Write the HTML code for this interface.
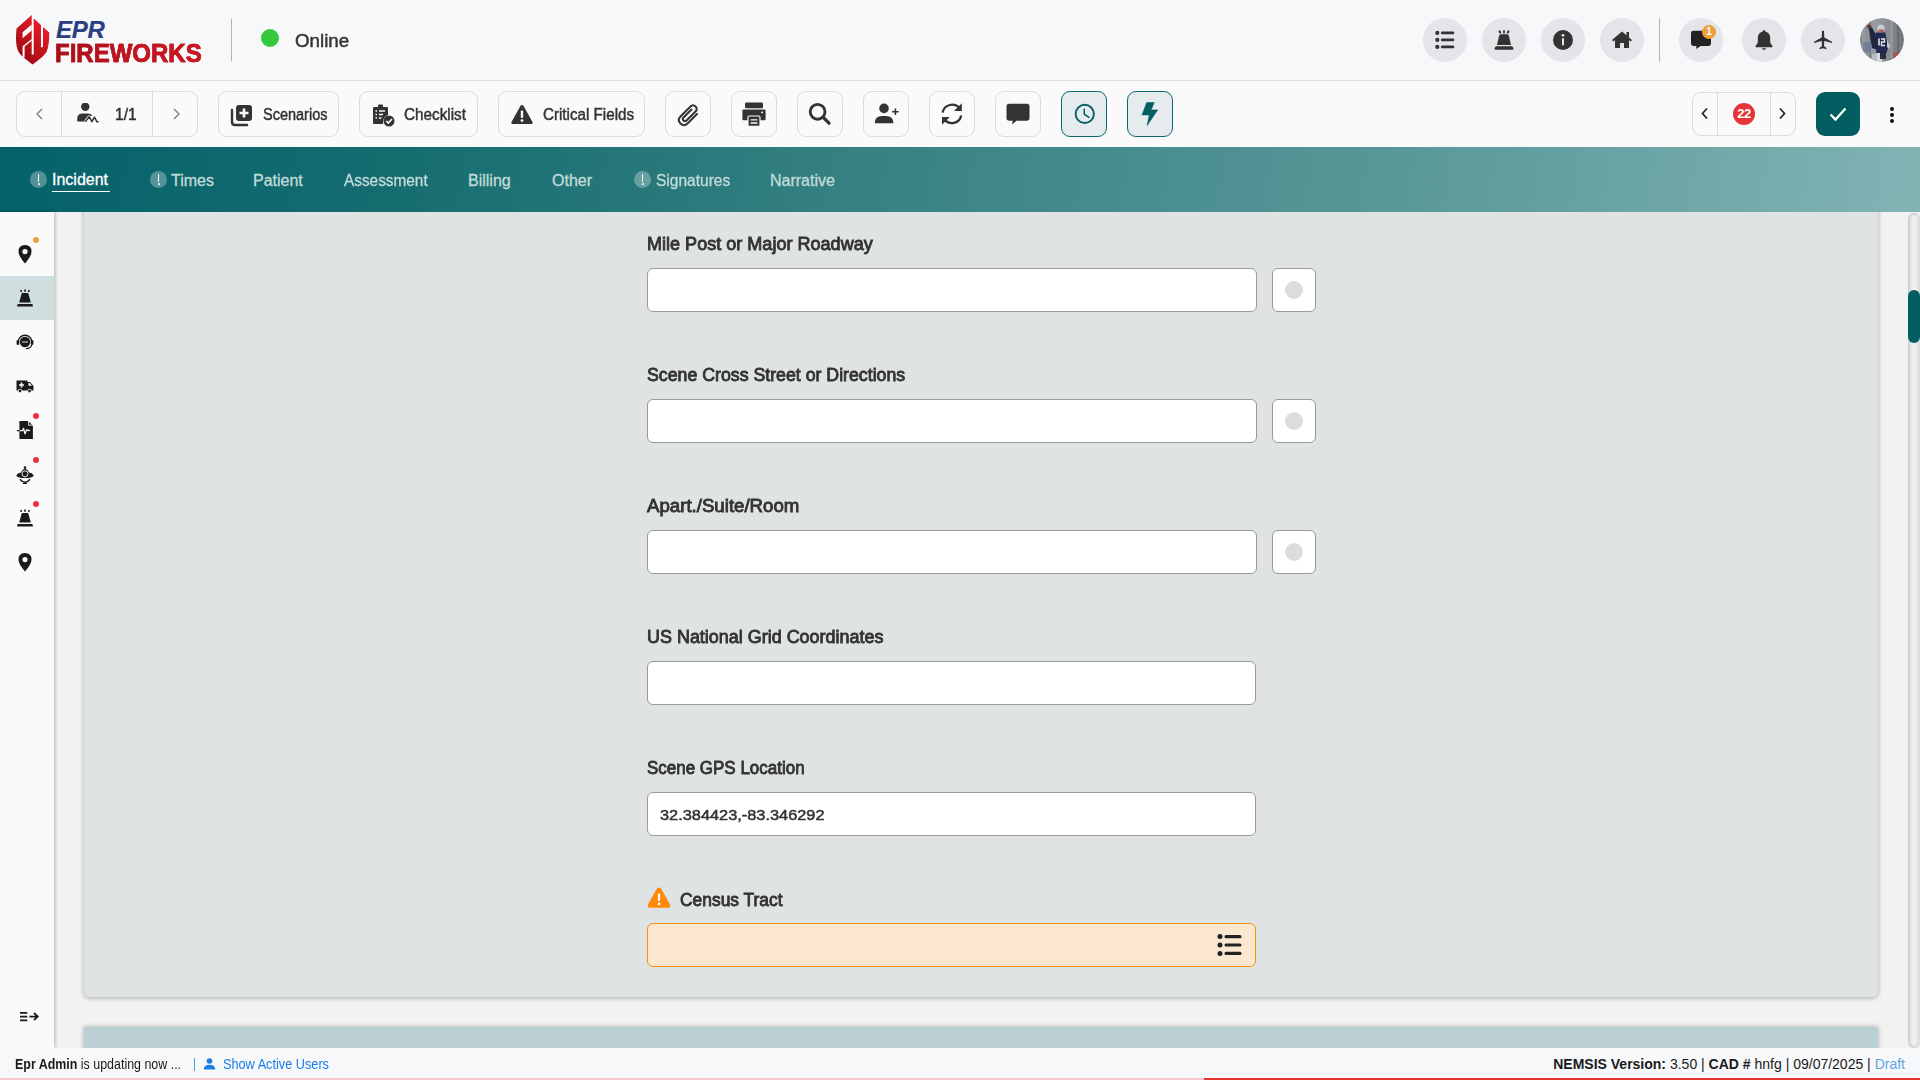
<!DOCTYPE html>
<html><head><meta charset="utf-8">
<style>
*{box-sizing:border-box;margin:0;padding:0}
html,body{width:1920px;height:1080px;overflow:hidden;font-family:"Liberation Sans",sans-serif;background:#f2f2f2;color:#333}
.abs{position:absolute}
#hdr{position:absolute;left:0;top:0;width:1920px;height:81px;background:#f7f8fa;border-bottom:1px solid #dedede}
#tb{position:absolute;left:0;top:81px;width:1920px;height:66px;background:#fafafa}
#tabs{position:absolute;left:0;top:147px;width:1920px;height:65px;background:linear-gradient(100deg,#05616a 0%,#146c6f 20%,#378182 45%,#5c9a9b 75%,#82b4b4 100%)}
#side{position:absolute;left:0;top:212px;width:54px;height:836px;background:#fafafa;box-shadow:1px 0 4px rgba(0,0,0,.26)}
#main{position:absolute;left:54px;top:212px;width:1866px;height:836px;overflow:hidden;background:#f2f2f2}
#card{position:absolute;left:30px;top:-60px;width:1794px;height:845px;background:#dfe3e4;border-radius:6px;box-shadow:0 1px 5px rgba(0,0,0,.3)}
#card2{position:absolute;left:30px;top:815px;width:1794px;height:60px;background:#bad0d3;border-radius:0;box-shadow:0 0 5px rgba(0,0,0,.3)}
#strack{position:absolute;left:1854px;top:1px;width:12px;height:835px;border-radius:6px;background:#efefef;box-shadow:inset 2px 0 3px rgba(0,0,0,.16),inset -2px 0 3px rgba(0,0,0,.1)}
#sthumb{position:absolute;left:1854px;top:78px;width:12px;height:53px;border-radius:6px;background:#035d61}
#foot{position:absolute;left:0;top:1048px;width:1920px;height:32px;background:#f7f8fa}
.btn{position:absolute;top:10px;height:46px;border:1px solid #dcdcdc;border-radius:9px;background:#fafafa}
.ib{width:46px}
.btxt{position:absolute;top:14px;font-size:16px;color:#333;white-space:nowrap;-webkit-text-stroke:0.45px #333;transform-origin:0 0}
.circ{position:absolute;top:18px;width:44px;height:44px;border-radius:50%;background:#e3e5e8}
.circ svg{position:absolute;left:11px;top:11px}
.tab{position:absolute;top:171px;font-size:16px;color:#c2dcdb;white-space:nowrap;-webkit-text-stroke:0.3px currentColor}
.ex{position:absolute;top:171px;width:17px;height:17px;border-radius:50%;background:rgba(255,255,255,.3)}
.ex:after{content:"";position:absolute;left:7.7px;top:3px;width:1.6px;height:7.5px;background:#fff;border-radius:1px}
.ex:before{content:"";position:absolute;left:7.5px;top:11.8px;width:2px;height:2px;background:#fff;border-radius:1px;transform:rotate(45deg)}
.lbl{position:absolute;font-size:18px;font-weight:400;color:#333;white-space:nowrap;transform-origin:0 0;-webkit-text-stroke:0.85px #333}
.inp{position:absolute;width:610px;height:44px;background:#fff;border:1px solid #9a9a9a;border-radius:6px}
.rad{position:absolute;width:44px;height:44px;background:#fff;border:1px solid #9a9a9a;border-radius:6px}
.rad:after{content:"";position:absolute;left:12px;top:12px;width:18px;height:18px;border-radius:50%;background:#dcdcdc}
.sico{position:absolute;left:15px;width:20px;height:20px}
.sdot{position:absolute;left:33px;width:6px;height:6px;border-radius:50%;background:#e8343a}
</style></head><body>
<div id="hdr">
<svg class="abs" style="left:10px;top:10px" width="50" height="60" viewBox="0 0 50 60">
<defs><linearGradient id="lg" x1="0.8" y1="0.1" x2="0.2" y2="0.9"><stop offset="0" stop-color="#ee1c2a"/><stop offset="1" stop-color="#9c0b12"/></linearGradient></defs>
<path d="M21.7,5 L6.6,18.6 C5.8,25 5.8,31 6.6,36 C7.6,41 9.8,44.5 12.8,46.8 L14.8,48.5 L22.5,54.4 C28,50.5 34,46 36.5,42 C38.8,37.5 39.2,30 39.2,22.6 L23.7,8.4 Z" fill="url(#lg)"/>
<path d="M21.7,4.5 L23.7,4.5 L23.7,44.5 L21.7,44.5 Z" fill="#fff"/>
<path d="M12.6,22.3 L21.7,14.6 L21.7,20.6 L12.6,28.2 Z" fill="#fff"/>
<path d="M12.6,36.2 L21.7,29 L21.7,30.8 L14.6,36.6 L14.6,47.5 L12.6,47.5 Z" fill="#fff"/>
<path d="M31,14 L33,15.8 L33,36.8 L31,37.5 Z" fill="#fff"/>
</svg>
<div class="abs" style="left:56px;top:16px;font-size:24px;font-weight:700;font-style:italic;color:#2b3e84;letter-spacing:-0.3px;-webkit-text-stroke:0.2px #2b3e84">EPR</div>
<div class="abs" style="left:55px;top:39px;font-size:25px;font-weight:700;color:#b8121c;transform:scaleX(0.96);transform-origin:0 0;letter-spacing:0px;-webkit-text-stroke:0.6px #b5131c;background:linear-gradient(90deg,#a50e17,#c8141f 60%,#d0161f);-webkit-background-clip:text;background-clip:text;-webkit-text-fill-color:transparent">FIREWORKS</div>
<div class="abs" style="left:231px;top:19px;width:1px;height:42px;background:#b4b4b4"></div>
<div class="abs" style="left:261px;top:29px;width:18px;height:18px;border-radius:50%;background:#33c93b"></div>
<div class="abs" style="left:295px;top:31px;font-size:18px;color:#333;-webkit-text-stroke:0.45px #333;transform:scaleX(1.04);transform-origin:0 0">Online</div>
<div class="circ" style="left:1423px"><svg width="22" height="22" viewBox="0 0 22 22" style="left:11px;top:11px"><circle cx="3.3" cy="3.9" r="2.1" fill="#333"/><circle cx="3.3" cy="10.9" r="2.1" fill="#333"/><circle cx="3.3" cy="17.9" r="2.1" fill="#333"/><rect x="6.9" y="2.6" width="13.4" height="2.7" rx="1.3" fill="#333"/><rect x="6.9" y="9.6" width="13.4" height="2.7" rx="1.3" fill="#333"/><rect x="6.9" y="16.6" width="13.4" height="2.7" rx="1.3" fill="#333"/></svg></div>
<div class="circ" style="left:1482px"><svg width="22" height="22" viewBox="0 0 22 22" style="left:11px;top:10px"><path d="M8,6.3 L14,6.3 Q15.6,6.3 15.9,7.8 L18,16.9 L4,16.9 L6.1,7.8 Q6.4,6.3 8,6.3 Z" fill="#333"/><path d="M3.2,18.2 L18.8,18.2 Q20.4,18.6 20.4,20.2 L20.4,21 Q20.4,21.8 19.6,21.8 L2.4,21.8 Q1.6,21.8 1.6,21 L1.6,20.2 Q1.6,18.6 3.2,18.2 Z" fill="#333"/><ellipse cx="6.9" cy="4" rx="1.1" ry="1.8" transform="rotate(-30 6.9 4)" fill="#333"/><ellipse cx="11" cy="3.9" rx="1" ry="1.8" fill="#333"/><ellipse cx="15.1" cy="4" rx="1.1" ry="1.8" transform="rotate(30 15.1 4)" fill="#333"/></svg></div>
<div class="circ" style="left:1541px"><svg width="22" height="22" viewBox="0 0 22 22"><circle cx="11" cy="11" r="10" fill="#333"/><circle cx="11" cy="6.3" r="1.4" fill="#e3e5e8"/><rect x="10" y="9" width="2" height="7.5" rx="1" fill="#e3e5e8"/></svg></div>
<div class="circ" style="left:1600px"><svg width="22" height="22" viewBox="0 0 22 22"><path d="M11,2.5 L1,11 L2.3,12.5 L4,11 L4,19 L9,19 L9,14 L13,14 L13,19 L18,19 L18,11 L19.7,12.5 L21,11 L18,8.4 L18,3 L15.5,3 L15.5,6.3 Z" fill="#333"/></svg></div>
<div class="abs" style="left:1659px;top:18px;width:1px;height:44px;background:#b4b4b4"></div>
<div class="circ" style="left:1679px"><svg width="22" height="22" viewBox="0 0 22 22" style="left:12px;top:11px"><path d="M2.4,1.8 L17.6,1.8 Q20,1.8 20,4.2 L20,14.5 Q20,16.9 17.6,16.9 L9.6,16.9 L5.2,19.9 L5.4,16.9 L2.4,16.9 Q0,16.9 0,14.5 L0,4.2 Q0,1.8 2.4,1.8 Z" fill="#222"/></svg>
<div class="abs" style="left:23px;top:7px;width:14px;height:14px;border-radius:50%;background:#f09d3c;color:#fff;font-size:10px;font-weight:700;text-align:center;line-height:14px">1</div></div>
<div class="circ" style="left:1742px"><svg width="22" height="22" viewBox="0 0 22 22" style="left:11px;top:11px"><path d="M11,1 Q12.3,1 12.3,2.6 Q17.2,3.8 17.2,9.5 L17.2,13.2 Q17.2,14.6 19.4,16.8 L19.4,18.2 L2.6,18.2 L2.6,16.8 Q4.8,14.6 4.8,13.2 L4.8,9.5 Q4.8,3.8 9.7,2.6 Q9.7,1 11,1 Z" fill="#333"/><path d="M8.6,19.2 Q11,22.4 13.4,19.2 Z" fill="#333"/></svg></div>
<div class="circ" style="left:1801px"><svg width="22" height="22" viewBox="0 0 22 22"><path d="M10,2 Q11,0.8 12,2 L12.3,8.5 L20,12.8 L20,14 L12.3,12 L12,17 L14.5,19 L14.5,20.2 L11,19.3 L7.5,20.2 L7.5,19 L10,17 L9.7,12 L2,14 L2,12.8 L9.7,8.5 Z" fill="#333"/></svg></div>
<div class="circ" style="left:1860px;background:none;overflow:hidden"><svg style="left:0;top:0" width="44" height="44" viewBox="0 0 44 44">
<defs><clipPath id="avc"><circle cx="22" cy="22" r="22"/></clipPath>
<linearGradient id="avbg" x1="0" y1="0" x2="1" y2="0"><stop offset="0" stop-color="#7f8488"/><stop offset=".3" stop-color="#9a9ea2"/><stop offset=".6" stop-color="#8c9094"/><stop offset="1" stop-color="#6f7479"/></linearGradient></defs>
<g clip-path="url(#avc)">
<rect width="44" height="44" fill="url(#avbg)"/>
<rect x="2" y="4" width="3" height="40" fill="#a8acb0" opacity=".5"/><rect x="9" y="2" width="2" height="40" fill="#6a6f74" opacity=".5"/><rect x="30" y="0" width="3" height="40" fill="#a0a4a8" opacity=".5"/><rect x="37" y="5" width="2" height="40" fill="#5e6368" opacity=".6"/>
<rect x="3" y="24" width="8" height="10" fill="#5a6a9a" opacity=".5"/>
<rect x="33" y="34" width="7" height="10" fill="#b04a52" opacity=".8"/>
<rect x="16" y="33" width="6" height="11" fill="#d8dadc"/>
<rect x="12" y="36" width="5" height="8" fill="#b8bcc0"/>
<path d="M8.5,9 L12,9.5 L16,17 L18,17 L18,32 L12,30 Z" fill="#20263e"/>
<circle cx="9.3" cy="8.6" r="2.2" fill="#5a3a30"/>
<path d="M15.5,14.5 L25.5,14.5 L27,24 L28,30 L26.5,35 L16,35 L16.5,24 Z" fill="#232a52"/>
<path d="M27,22 L30,28 L29,31 L27,29 Z" fill="#c8ccd0"/>
<rect x="18.2" y="20.5" width="1.6" height="7" fill="#e8e4e4"/><path d="M21,21 L24.5,21 L24.5,24 L21.5,24 L21.5,27.5 L25,27.5" stroke="#e8e4e4" stroke-width="1.4" fill="none"/>
<rect x="20" y="35" width="6" height="6" fill="#2a2f48"/>
<circle cx="21" cy="10" r="3.6" fill="#c9ccd2"/>
<rect x="19" y="11.5" width="4.5" height="3" fill="#b85a50"/>
</g></svg></div>
</div>
<div id="tb">
<div class="btn" style="left:16px;width:182px"><div class="abs" style="left:44px;top:0;width:1px;height:44px;background:#dcdcdc"></div><div class="abs" style="left:135px;top:0;width:1px;height:44px;background:#dcdcdc"></div>
<svg class="abs" style="left:17px;top:15px" width="12" height="14" viewBox="0 0 12 14"><path d="M8,2 L3,7 L8,12" stroke="#8a8e96" stroke-width="1.6" fill="none"/></svg>
<svg class="abs" style="left:59px;top:11px" width="24" height="22" viewBox="0 0 24 22"><circle cx="9.3" cy="3.8" r="4.2" fill="#333"/><path d="M1.2,18.6 L1.2,16 Q1.2,10.6 7,10.6 L11.6,10.6 Q15,10.6 16.4,13 L13.4,13 L10.2,18.6 Z" fill="#333"/><path d="M9.4,18.4 L13.2,13.8 L15.9,18.6 L18.4,14.2 L21,18.8 L22.6,18.8" stroke="#fafafa" stroke-width="3" fill="none" stroke-linejoin="round"/><path d="M9.4,18.4 L13.2,13.8 L15.9,18.6 L18.4,14.2 L21,18.8 L22.6,18.8" stroke="#333" stroke-width="1.5" fill="none" stroke-linejoin="round"/></svg>
<div class="abs" style="left:98px;top:14px;font-size:16px;color:#333;-webkit-text-stroke:0.45px #333;transform:scaleX(.97);transform-origin:0 0">1/1</div>
<svg class="abs" style="left:153px;top:15px" width="12" height="14" viewBox="0 0 12 14"><path d="M4,2 L9,7 L4,12" stroke="#8a8e96" stroke-width="1.6" fill="none"/></svg>
</div>
<div class="btn" style="left:218px;width:121px">
<svg class="abs" style="left:10px;top:10px" width="26" height="26" viewBox="0 0 26 26"><path d="M3,8 L3,20 Q3,23 6,23 L18,23" stroke="#333" stroke-width="2.4" fill="none" stroke-linecap="round"/><rect x="7" y="3" width="16" height="16" rx="3" fill="#333"/><path d="M15,6.5 L15,15.5 M10.5,11 L19.5,11" stroke="#fafafa" stroke-width="2.6"/></svg>
<div class="btxt" style="left:44px;transform:scaleX(.906)">Scenarios</div></div>
<div class="btn" style="left:359px;width:119px">
<svg class="abs" style="left:10px;top:10px" width="26" height="26" viewBox="0 0 26 26"><path d="M3,6 Q3,5 4,5 L8,5 L8,3.5 Q8,2.5 9,2.5 L12,2.5 Q13,2.5 13,3.5 L13,5 L17,5 Q18,5 18,6 L18,13 Q13,15 13,20 L13,22 L4,22 Q3,22 3,21 Z" fill="#333"/><path d="M5.5,9 L7,9 M9,9 L15,9 M5.5,12.5 L7,12.5 M9,12.5 L13,12.5 M5.5,16 L7,16 M9,16 L11.5,16" stroke="#fafafa" stroke-width="1.5"/><circle cx="19" cy="19" r="5.5" fill="#333"/><path d="M16.3,19 L18.3,21 L22,17" stroke="#fafafa" stroke-width="1.6" fill="none"/></svg>
<div class="btxt" style="left:44px;transform:scaleX(.955)">Checklist</div></div>
<div class="btn" style="left:498px;width:147px">
<svg class="abs" style="left:10px;top:10px" width="26" height="26" viewBox="0 0 26 26"><path d="M13,3 Q14,3 14.6,4 L23.5,20 Q24.2,22 22,22 L4,22 Q1.8,22 2.5,20 L11.4,4 Q12,3 13,3 Z" fill="#333"/><rect x="11.8" y="8.5" width="2.4" height="7.5" rx="1" fill="#fafafa"/><circle cx="13" cy="18.6" r="1.4" fill="#fafafa"/></svg>
<div class="btxt" style="left:44px;transform:scaleX(.948)">Critical Fields</div></div>
<div class="btn ib" style="left:665px"><svg class="abs" style="left:10px;top:10px" width="26" height="26" viewBox="0 0 26 26"><path d="M21,12 L11.5,21.5 Q8,25 4.5,21.5 Q1,18 4.5,14.5 L14.5,4.5 Q17,2 19.5,4.5 Q22,7 19.5,9.5 L10.5,18.5 Q9,20 7.5,18.5 Q6,17 7.5,15.5 L15.5,7.5" stroke="#333" stroke-width="2" fill="none" stroke-linecap="round"/></svg></div>
<div class="btn ib" style="left:731px"><svg class="abs" style="left:10px;top:10px" width="25" height="26" viewBox="0 0 25 26"><rect x="3" y="0.6" width="18" height="5.6" rx="1.2" fill="#333"/><rect x="0.4" y="7.4" width="23.2" height="10.8" rx="1.2" fill="#333"/><rect x="6" y="14" width="12" height="10.4" rx="1.2" fill="#333" stroke="#fafafa" stroke-width="1.2"/><path d="M8.6,17.8 L15.4,17.8 M8.6,21 L15.4,21" stroke="#fafafa" stroke-width="1.3"/><rect x="19.2" y="9.6" width="1.8" height="1.6" fill="#fafafa"/></svg></div>
<div class="btn ib" style="left:797px"><svg class="abs" style="left:10px;top:10px" width="24" height="24" viewBox="0 0 24 24"><circle cx="9.6" cy="9.8" r="7.4" stroke="#333" stroke-width="2.9" fill="none"/><path d="M15,15.2 L21,21.2" stroke="#333" stroke-width="3.3" stroke-linecap="round"/></svg></div>
<div class="btn ib" style="left:863px"><svg class="abs" style="left:10px;top:10px" width="26" height="24" viewBox="0 0 26 24"><circle cx="10" cy="6.4" r="4.8" fill="#333"/><path d="M0.8,21.2 Q0.8,14 8,14 L12,14 Q19.4,14 19.4,21.2 Z" fill="#333"/><path d="M21.4,6.4 L21.4,13 M18.1,9.7 L24.7,9.7" stroke="#333" stroke-width="1.6"/></svg></div>
<div class="btn ib" style="left:929px"><svg class="abs" style="left:10px;top:10px" width="24" height="24" viewBox="0 0 24 24"><path d="M2.6,10.6 A9.6,9.6 0 0 1 19.6,6.4" stroke="#333" stroke-width="2.3" fill="none"/><path d="M21.8,1.2 L21.8,9 L14,9 Z" fill="#333"/><path d="M21.2,13.4 A9.6,9.6 0 0 1 4.4,17.6" stroke="#333" stroke-width="2.3" fill="none"/><path d="M2,22.8 L2,15 L9.8,15 Z" fill="#333"/></svg></div>
<div class="btn ib" style="left:995px"><svg class="abs" style="left:10px;top:10px" width="24" height="24" viewBox="0 0 24 24"><path d="M3.2,1.8 L20.8,1.8 Q23.5,1.8 23.5,4.5 L23.5,16 Q23.5,18.7 20.8,18.7 L10.5,18.7 L6.2,22.6 L6.6,18.7 L3.2,18.7 Q0.5,18.7 0.5,16 L0.5,4.5 Q0.5,1.8 3.2,1.8 Z" fill="#333"/></svg></div>
<div class="btn ib" style="left:1061px;border-color:#0b6a6e;background:#e6ecee"><svg class="abs" style="left:11px;top:11px" width="24" height="24" viewBox="0 0 24 24"><circle cx="11.75" cy="10.9" r="9.1" stroke="#0a5f66" stroke-width="1.9" fill="none"/><path d="M11.25,6.25 L11.25,11.25 L16,14.4" stroke="#0a5f66" stroke-width="1.5" fill="none" stroke-linecap="round"/></svg></div>
<div class="btn ib" style="left:1127px;border-color:#0b6a6e;background:#e6ecee"><svg class="abs" style="left:11px;top:10px" width="24" height="26" viewBox="0 0 24 26"><path d="M7.75,0.4 L15.25,0.4 L12.1,7.9 L18.7,7.9 L8.1,23.5 L10.25,12.9 L3,12.9 Z" fill="#035d61" stroke="#035d61" stroke-width="0.6" stroke-linejoin="round"/></svg></div>
<div class="btn" style="left:1692px;top:11px;width:104px;height:44px"><div class="abs" style="left:24px;top:0;width:1px;height:42px;background:#dcdcdc"></div><div class="abs" style="left:77px;top:0;width:1px;height:42px;background:#dcdcdc"></div>
<svg class="abs" style="left:6px;top:14px" width="12" height="14" viewBox="0 0 12 14"><path d="M8,1.5 L3.5,6.5 L8,11.5" stroke="#222" stroke-width="1.7" fill="none"/></svg>
<div class="abs" style="left:40px;top:10px;width:22px;height:22px;border-radius:50%;background:#e63538;color:#fff;font-size:13px;font-weight:700;text-align:center;line-height:22px;letter-spacing:-0.5px">22</div>
<svg class="abs" style="left:83px;top:14px" width="12" height="14" viewBox="0 0 12 14"><path d="M4,1.5 L8.5,6.5 L4,11.5" stroke="#222" stroke-width="1.7" fill="none"/></svg>
</div>
<div class="abs" style="left:1816px;top:11px;width:44px;height:44px;border-radius:9px;background:#025d61"><svg class="abs" style="left:12px;top:12px" width="20" height="20" viewBox="0 0 20 20"><path d="M2.5,10.5 L7.5,15.5 L17.5,4.5" stroke="#fff" stroke-width="2.4" fill="none"/></svg></div>
<div class="abs" style="left:1890px;top:26px;width:4px;height:4px;border-radius:50%;background:#111"></div>
<div class="abs" style="left:1890px;top:32px;width:4px;height:4px;border-radius:50%;background:#111"></div>
<div class="abs" style="left:1890px;top:38px;width:4px;height:4px;border-radius:50%;background:#111"></div>
</div>
<div id="tabs">
<div class="ex" style="left:30px;top:24px"></div>
<div class="tab" style="left:52px;top:24px;color:#fff">Incident</div>
<div class="abs" style="left:52px;top:43.7px;width:58px;height:1.5px;background:#fff"></div>
<div class="ex" style="left:150px;top:24px"></div>
<div class="tab" style="left:171px;top:25px">Times</div>
<div class="tab" style="left:253px;top:25px">Patient</div>
<div class="tab" style="left:344px;top:25px;transform:scaleX(.96);transform-origin:0 0">Assessment</div>
<div class="tab" style="left:468px;top:25px">Billing</div>
<div class="tab" style="left:552px;top:25px">Other</div>
<div class="ex" style="left:634px;top:24px"></div>
<div class="tab" style="left:656px;top:25px;transform:scaleX(.97);transform-origin:0 0">Signatures</div>
<div class="tab" style="left:770px;top:25px">Narrative</div>
</div>
<div id="main">
<div id="card"></div>
<div id="card2"></div>
<div class="lbl" style="left:593px;top:22px;transform:scaleX(1.003)">Mile Post or Major Roadway</div><div class="inp" style="left:593px;top:56px;width:610px"></div><div class="rad" style="left:1218px;top:56px"></div>
<div class="lbl" style="left:593px;top:153px;transform:scaleX(0.985)">Scene Cross Street or Directions</div><div class="inp" style="left:593px;top:187px;width:610px"></div><div class="rad" style="left:1218px;top:187px"></div>
<div class="lbl" style="left:593px;top:284px;transform:scaleX(1.036)">Apart./Suite/Room</div><div class="inp" style="left:593px;top:318px;width:610px"></div><div class="rad" style="left:1218px;top:318px"></div>
<div class="lbl" style="left:593px;top:415px;transform:scaleX(0.997)">US National Grid Coordinates</div><div class="inp" style="left:593px;top:449px;width:609px"></div>
<div class="lbl" style="left:593px;top:546px;transform:scaleX(0.943)">Scene GPS Location</div><div class="inp" style="left:593px;top:580px;width:609px"><div class="abs" style="left:12px;top:14px;font-size:14.6px;color:#333;font-weight:400;-webkit-text-stroke:0.5px #333;transform:scaleX(1.12);transform-origin:0 0">32.384423,-83.346292</div></div>
<svg class="abs" style="left:593px;top:675px" width="24" height="22" viewBox="0 0 24 22"><path d="M12,0.6 Q13.6,0.6 14.5,2.2 L22.8,17 Q24.4,20.8 20.6,20.8 L3.4,20.8 Q-0.4,20.8 1.2,17 L9.5,2.2 Q10.4,0.6 12,0.6 Z" fill="#fd8a0a"/><rect x="10.9" y="6.4" width="2.2" height="7.6" rx="1" fill="#fff"/><circle cx="12" cy="16.9" r="1.3" fill="#fff"/></svg><div class="lbl" style="left:626px;top:678px;transform:scaleX(0.967)">Census Tract</div><div class="inp" style="left:593px;top:711px;width:609px;background:#fbe7d0;border-color:#fa900e"></div><svg class="abs" style="left:1163px;top:721px" width="26" height="24" viewBox="0 0 26 24"><circle cx="3" cy="3.6" r="2.5" fill="#222"/><circle cx="3" cy="12" r="2.5" fill="#222"/><circle cx="3" cy="20.4" r="2.5" fill="#222"/><rect x="7.5" y="2.1" width="17" height="3.2" rx="1.5" fill="#222"/><rect x="7.5" y="10.4" width="17" height="3.2" rx="1.5" fill="#222"/><rect x="7.5" y="18.8" width="17" height="3.2" rx="1.5" fill="#222"/></svg>
<div id="strack"></div><div id="sthumb"></div>
</div>
<div id="side">
<div class="abs" style="left:0;top:64px;width:54px;height:44px;background:#cfdfe0"></div>
<svg class="sico" style="top:32px" viewBox="0 0 20 20"><path d="M10,1 Q16.5,1 16.5,7.5 Q16.5,12 10,19.5 Q3.5,12 3.5,7.5 Q3.5,1 10,1 Z M10,5 A2.6,2.6 0 1 0 10,10.2 A2.6,2.6 0 1 0 10,5 Z" fill="#1a1a1a" fill-rule="evenodd"/></svg>
<div class="sdot" style="top:25px;background:#f0a040"></div>
<svg class="sico" style="top:76px" viewBox="0 0 20 20"><path d="M7.4,5 L12.6,5 Q13.2,5 13.4,5.8 L15.8,14.6 L4.2,14.6 L6.6,5.8 Q6.8,5 7.4,5 Z" fill="#1a1a1a"/><path d="M2.6,16.1 L17.4,16.1 L18,18.6 L2,18.6 Z" fill="#1a1a1a"/><path d="M5.6,2.2 L6.6,3.8 M10,1.6 L10,3.7 M14.4,2.2 L13.4,3.8" stroke="#1a1a1a" stroke-width="1.6"/></svg>
<svg class="sico" style="top:120px" viewBox="0 0 20 20"><circle cx="10" cy="10" r="5.2" fill="#1a1a1a"/><path d="M3.2,10 A6.8,6.8 0 0 1 16.8,10" stroke="#1a1a1a" stroke-width="1.4" fill="none"/><rect x="1.6" y="8" width="2.6" height="5" rx="1.2" fill="#1a1a1a"/><rect x="15.8" y="8" width="2.6" height="5" rx="1.2" fill="#1a1a1a"/><path d="M16.6,12.8 Q16,16.4 11,16.6" stroke="#1a1a1a" stroke-width="1.2" fill="none"/><circle cx="8" cy="10" r="0.8" fill="#fafafa"/><circle cx="10" cy="10" r="0.8" fill="#fafafa"/><circle cx="12" cy="10" r="0.8" fill="#fafafa"/></svg>
<svg class="sico" style="top:164px" viewBox="0 0 20 20"><path d="M1.5,4.5 L12.5,4.5 L12.5,6 L15,6 L18.5,10 L18.5,14.5 L1.5,14.5 Z" fill="#1a1a1a"/><path d="M13.5,7 L14.8,7 L17,9.8 L13.5,9.8 Z" fill="#fafafa"/><path d="M6.5,6.5 L6.5,11.5 M4,9 L9,9" stroke="#fafafa" stroke-width="1.6"/><circle cx="5" cy="15" r="1.8" fill="#1a1a1a" stroke="#fafafa" stroke-width="0.8"/><circle cx="14.5" cy="15" r="1.8" fill="#1a1a1a" stroke="#fafafa" stroke-width="0.8"/></svg>
<svg class="sico" style="top:208px" viewBox="0 0 20 20"><path d="M4.4,0.9 L13.2,0.9 L17.9,5.6 L17.9,19 L4.4,19 Z" fill="#1a1a1a"/><path d="M13.6,0.6 L13.6,5.2 L18.2,5.2" stroke="#fafafa" stroke-width="0.9" fill="none"/><path d="M2,10.6 L5,10.6" stroke="#1a1a1a" stroke-width="1.3"/><path d="M4.6,10.6 L7.5,10.6 L8.6,8.4 L10,13.8 L11.6,10 L15,10.6" stroke="#fafafa" stroke-width="1.3" fill="none" stroke-linejoin="round"/></svg>
<div class="sdot" style="top:201px;background:#e8343a"></div>
<svg class="sico" style="top:252px" viewBox="0 0 20 20"><path d="M1.2,11.4 Q3,8.6 6,8.4 Q7.5,5 10,4.8 Q12.5,5 14,8.4 Q17,8.6 18.8,11.4 Q17.5,14 10,14 Q2.5,14 1.2,11.4 Z" fill="#1a1a1a"/><circle cx="10" cy="3.6" r="1.3" fill="#1a1a1a"/><circle cx="10" cy="9.8" r="3" fill="#1a1a1a" stroke="#fafafa" stroke-width="0.9"/><path d="M5,15.2 Q10,21.5 15,15.2" stroke="#1a1a1a" stroke-width="1.5" fill="none"/><ellipse cx="10" cy="19.6" rx="2.2" ry="1.2" fill="#1a1a1a"/></svg>
<div class="sdot" style="top:245px;background:#e8343a"></div>
<svg class="sico" style="top:296px" viewBox="0 0 20 20"><path d="M7.4,5 L12.6,5 Q13.2,5 13.4,5.8 L15.8,14.6 L4.2,14.6 L6.6,5.8 Q6.8,5 7.4,5 Z" fill="#1a1a1a"/><path d="M2.6,16.1 L17.4,16.1 L18,18.6 L2,18.6 Z" fill="#1a1a1a"/><path d="M5.6,2.2 L6.6,3.8 M10,1.6 L10,3.7 M14.4,2.2 L13.4,3.8" stroke="#1a1a1a" stroke-width="1.6"/></svg>
<div class="sdot" style="top:289px;background:#e8343a"></div>
<svg class="sico" style="top:340px" viewBox="0 0 20 20"><path d="M10,1 Q16.5,1 16.5,7.5 Q16.5,12 10,19.5 Q3.5,12 3.5,7.5 Q3.5,1 10,1 Z M10,5 A2.6,2.6 0 1 0 10,10.2 A2.6,2.6 0 1 0 10,5 Z" fill="#1a1a1a" fill-rule="evenodd"/></svg>
<svg class="abs" style="left:18px;top:797px" width="22" height="14" viewBox="0 0 22 14"><path d="M2,3.9 L9.3,3.9 M2,7.6 L9.3,7.6 M2,11.3 L9.3,11.3" stroke="#1a1a1a" stroke-width="1.7" fill="none"/><path d="M11.4,7.6 L19.4,7.6 M16,4 L19.7,7.6 L16,11.2" stroke="#1a1a1a" stroke-width="1.8" fill="none"/></svg>
</div>
<div id="foot">
<div class="abs" style="left:15px;top:8px;font-size:14px;color:#1a1a1a;white-space:nowrap;transform:scaleX(.888);transform-origin:0 0"><b>Epr Admin</b> is updating now ...</div>
<div class="abs" style="left:193.5px;top:10px;width:1px;height:13px;background:#5b9be0"></div>
<svg class="abs" style="left:203px;top:10px" width="13" height="12" viewBox="0 0 13 12"><circle cx="6.5" cy="3" r="2.8" fill="#1a7ee0"/><path d="M0.8,11.5 Q0.8,6.8 6.5,6.8 Q12.2,6.8 12.2,11.5 Z" fill="#1a7ee0"/></svg>
<div class="abs" style="left:223px;top:8px;font-size:14px;color:#1a7ee8;white-space:nowrap;transform:scaleX(.908);transform-origin:0 0">Show Active Users</div>
<div class="abs" style="left:1550px;top:8px;font-size:14px;color:#1a1a1a;white-space:nowrap;width:355px;text-align:right"><b>NEMSIS Version:</b> 3.50 | <b>CAD #</b> hnfg | 09/07/2025 | <span style="color:#5fa4de">Draft</span></div>
</div>
<div class="abs" style="left:0;top:1078px;width:1204px;height:2px;background:#fdc8cf"></div>
<div class="abs" style="left:1204px;top:1078px;width:716px;height:2px;background:#e8332d"></div>
</body></html>
